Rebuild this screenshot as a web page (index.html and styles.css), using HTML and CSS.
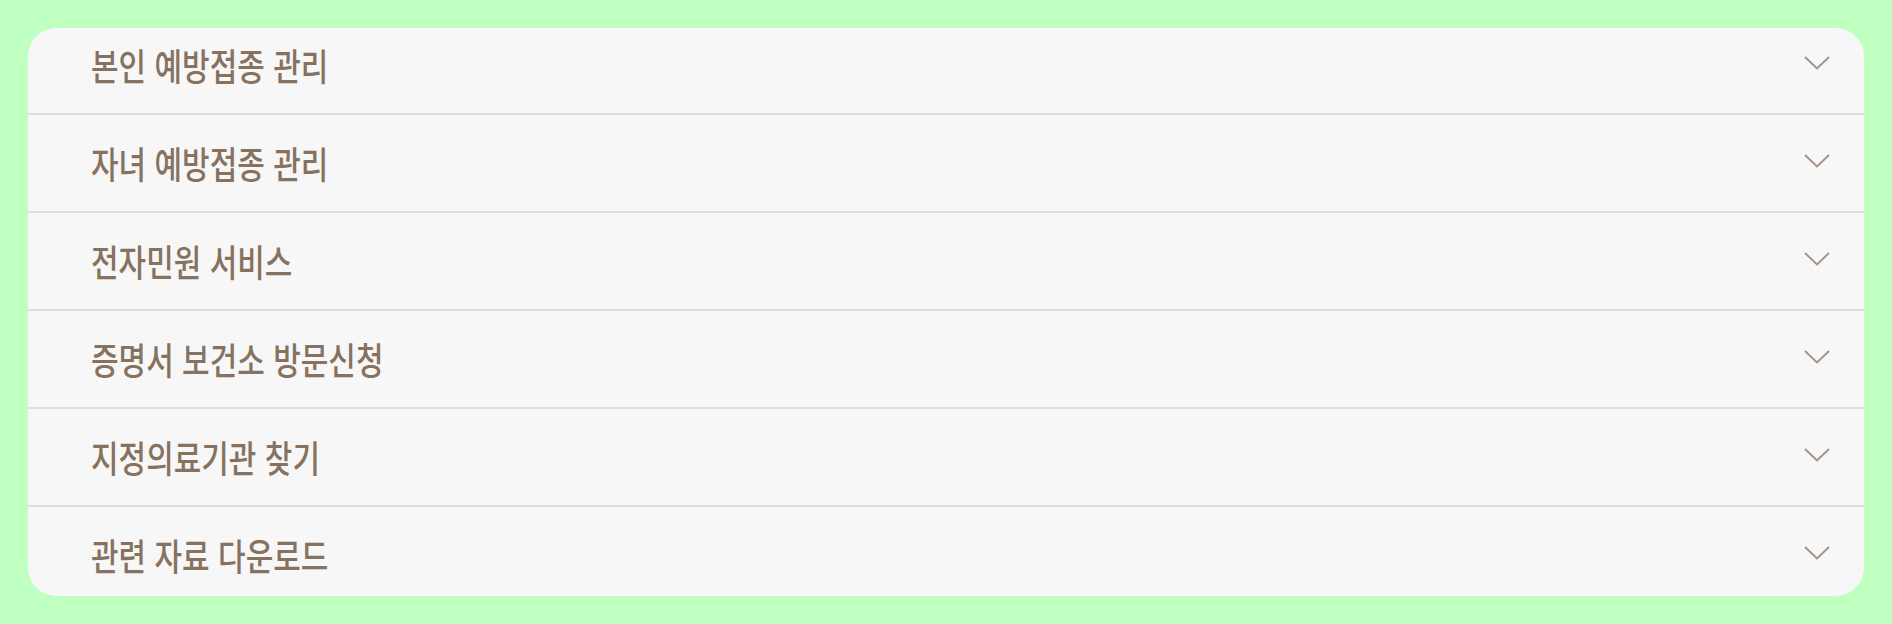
FILE: index.html
```html
<!DOCTYPE html>
<html lang="ko">
<head>
<meta charset="utf-8">
<link rel="stylesheet" href="styles.css">
</head>
<body>
<div class="card">
  <ul class="list">
    <li class="row"><span class="label">본인 예방접종 관리</span><svg class="chev" viewBox="0 0 26 14"><path d="M1 1 L13 12.5 L25 1"/></svg></li>
    <li class="row"><span class="label">자녀 예방접종 관리</span><svg class="chev" viewBox="0 0 26 14"><path d="M1 1 L13 12.5 L25 1"/></svg></li>
    <li class="row"><span class="label">전자민원 서비스</span><svg class="chev" viewBox="0 0 26 14"><path d="M1 1 L13 12.5 L25 1"/></svg></li>
    <li class="row"><span class="label">증명서 보건소 방문신청</span><svg class="chev" viewBox="0 0 26 14"><path d="M1 1 L13 12.5 L25 1"/></svg></li>
    <li class="row"><span class="label">지정의료기관 찾기</span><svg class="chev" viewBox="0 0 26 14"><path d="M1 1 L13 12.5 L25 1"/></svg></li>
    <li class="row"><span class="label">관련 자료 다운로드</span><svg class="chev" viewBox="0 0 26 14"><path d="M1 1 L13 12.5 L25 1"/></svg></li>
  </ul>
</div>
</body>
</html>
```
FILE: styles.css
```css
html, body {
  margin: 0;
  padding: 0;
  background: #bfffbf;
}
body {
  padding: 28px;
  font-family: "Noto Sans CJK KR", "Noto Sans", sans-serif;
}
.card {
  background: #f7f7f7;
  border-radius: 28px;
  height: 568px;
  overflow: hidden;
}
.list {
  list-style: none;
  margin: -11px 0 0 0;
  padding: 0;
}
.row {
  height: 96px;
  display: flex;
  align-items: center;
  justify-content: space-between;
  padding: 0 34px 0 63px;
  border-bottom: 2px solid #e0dddd;
}
.row:last-child {
  border-bottom: none;
}
.label {
  display: inline-block;
  font-size: 37px;
  font-weight: 500;
  color: #86725f;
  letter-spacing: 0;
  line-height: 1;
  padding-top: 0;
  transform: scaleX(0.81);
  transform-origin: left center;
  white-space: nowrap;
}
.chev {
  width: 26px;
  height: 14px;
  margin-top: -5px;
  fill: none;
  stroke: #a39388;
  stroke-width: 1.9;
}
```
